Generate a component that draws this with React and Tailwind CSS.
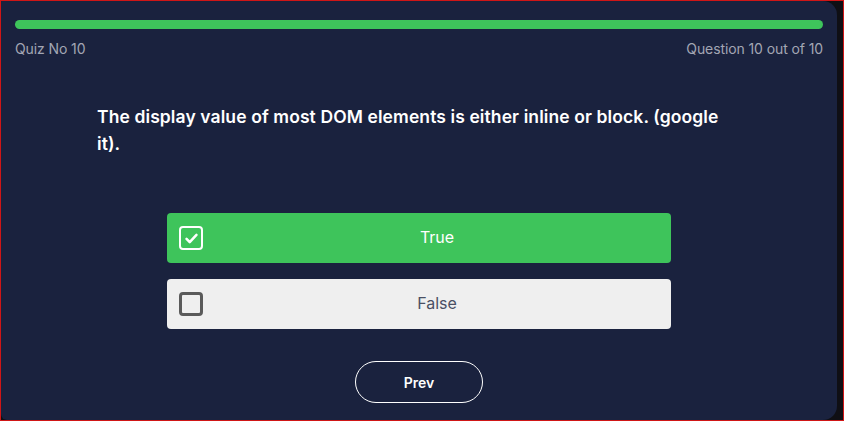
import { useState } from "react";

const OPTIONS = ["True", "False"];

function CheckBox({ checked }) {
  return checked ? (
    <span className="flex h-6 w-6 shrink-0 items-center justify-center rounded-[4px] border-[2.5px] border-white">
      <svg viewBox="0 0 24 24" className="h-[17px] w-[17px]" fill="none" stroke="white" strokeWidth="3.6" strokeLinecap="round" strokeLinejoin="round">
        <path d="M5 12.5l4.5 4.5L19 7" />
      </svg>
    </span>
  ) : (
    <span className="block h-6 w-6 shrink-0 rounded-[4px] border-[3px] border-[#5a5a5a]" />
  );
}

function App() {
  const [selected, setSelected] = useState(0);

  return (
    <main
      className="h-[421px] w-[844px] overflow-hidden border border-[#d01616] bg-[#0f0f14]"
      style={{ fontFamily: "Inter, 'Noto Sans', sans-serif" }}
    >
      <div className="mr-[6px] flex h-full flex-col rounded-tr-[14px] rounded-br-[14px] rounded-bl-[6px] bg-[#1a223e] px-[14px] pt-[19px]">
        <div className="h-[9px] w-full rounded-full bg-[#3ec45b]" />
        <div className="mt-[9px] flex justify-between text-[14px] tracking-[-0.1px] text-[#a3a6b4]">
          <span>Quiz No 10</span>
          <span>Question 10 out of 10</span>
        </div>

        <h1 className="ml-[82px] mt-[44px] w-[630px] text-[17.5px] font-semibold leading-[27px] tracking-[0.1px] text-white">
          The display value of most DOM elements is either inline or block. (google it).
        </h1>

        <section className="mx-auto mt-[56px] flex w-[504px] flex-col gap-4">
          {OPTIONS.map((opt, i) => (
            <button
              key={opt}
              onClick={() => setSelected(i)}
              className={
                selected === i
                  ? "flex h-[50px] items-center rounded-[4px] bg-[#3ec45b] pl-3 text-[16px] text-white"
                  : "flex h-[50px] items-center rounded-[4px] bg-[#efefef] pl-3 text-[16px] text-[#4a5064]"
              }
            >
              <CheckBox checked={selected === i} />
              <span className="mb-[3px] flex-1 text-center">{opt}</span>
            </button>
          ))}
        </section>

        <div className="mt-[32px] flex justify-center">
          <button className="h-[42px] w-[128px] rounded-full border border-white text-[14px] font-semibold text-white">
            Prev
          </button>
        </div>
      </div>
    </main>
  );
}

export default App;
